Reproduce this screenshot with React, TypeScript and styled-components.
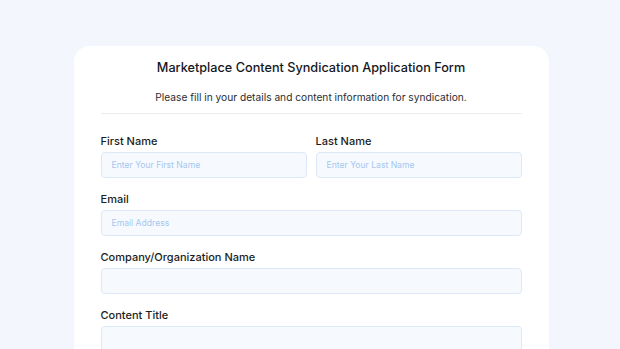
import React from 'react'
import styled, { createGlobalStyle } from 'styled-components'

const GlobalStyle = createGlobalStyle`
   html, body {
      margin: 0;
      padding: 0;
      background: #f3f7fd;
      font-family: Inter, 'Noto Sans', sans-serif;
      color: #1b1d22;
   }
`

const Page = styled.div`
   height: 349px;
   overflow: hidden;
   display: flex;
   justify-content: center;
   padding: 46px 0 0 2px;
   box-sizing: border-box;
`

const Card = styled.form`
   width: 475px;
   background: #ffffff;
   border-radius: 16px;
   padding: 14px 27px 20px;
   box-sizing: border-box;
   align-self: flex-start;
`

const Title = styled.h1`
   margin: 0;
   font-size: 12.7px;
   line-height: 16px;
   font-weight: 500;
   text-align: center;
   color: #15171c;
`

const Subtitle = styled.p`
   margin: 14px 0 0;
   font-size: 10.2px;
   line-height: 14px;
   text-align: center;
   color: #2a2c31;
`

const Divider = styled.hr`
   border: none;
   height: 1px;
   background: #ebedf0;
   margin: 9px 0 20px;
`

const Row = styled.div`
   display: flex;
   gap: 9px;
`

const Field = styled.label`
   flex: 1;
   display: flex;
   flex-direction: column;
   margin-bottom: 14px;
`

const Label = styled.span`
   font-size: 11px;
   line-height: 14px;
   font-weight: 500;
   color: #1b1d22;
   margin-bottom: 4px;
`

const Input = styled.input`
   height: 26px;
   box-sizing: border-box;
   border: 1px solid #dde9f7;
   background: #f6faff;
   border-radius: 4px;
   padding: 0 10px;
   font-family: inherit;
   font-size: 8.6px;
   outline: none;

   &::placeholder {
      color: #a6c6ee;
   }
`

export default function App() {
   return (
      <>
         <GlobalStyle />
         <Page>
            <Card>
               <Title>Marketplace Content Syndication Application Form</Title>
               <Subtitle>Please fill in your details and content information for syndication.</Subtitle>
               <Divider />
               <Row>
                  <Field>
                     <Label>First Name</Label>
                     <Input placeholder="Enter Your First Name" />
                  </Field>
                  <Field>
                     <Label>Last Name</Label>
                     <Input placeholder="Enter Your Last Name" />
                  </Field>
               </Row>
               <Field>
                  <Label>Email</Label>
                  <Input placeholder="Email Address" />
               </Field>
               <Field>
                  <Label>Company/Organization Name</Label>
                  <Input />
               </Field>
               <Field>
                  <Label>Content Title</Label>
                  <Input />
               </Field>
            </Card>
         </Page>
      </>
   )
}
